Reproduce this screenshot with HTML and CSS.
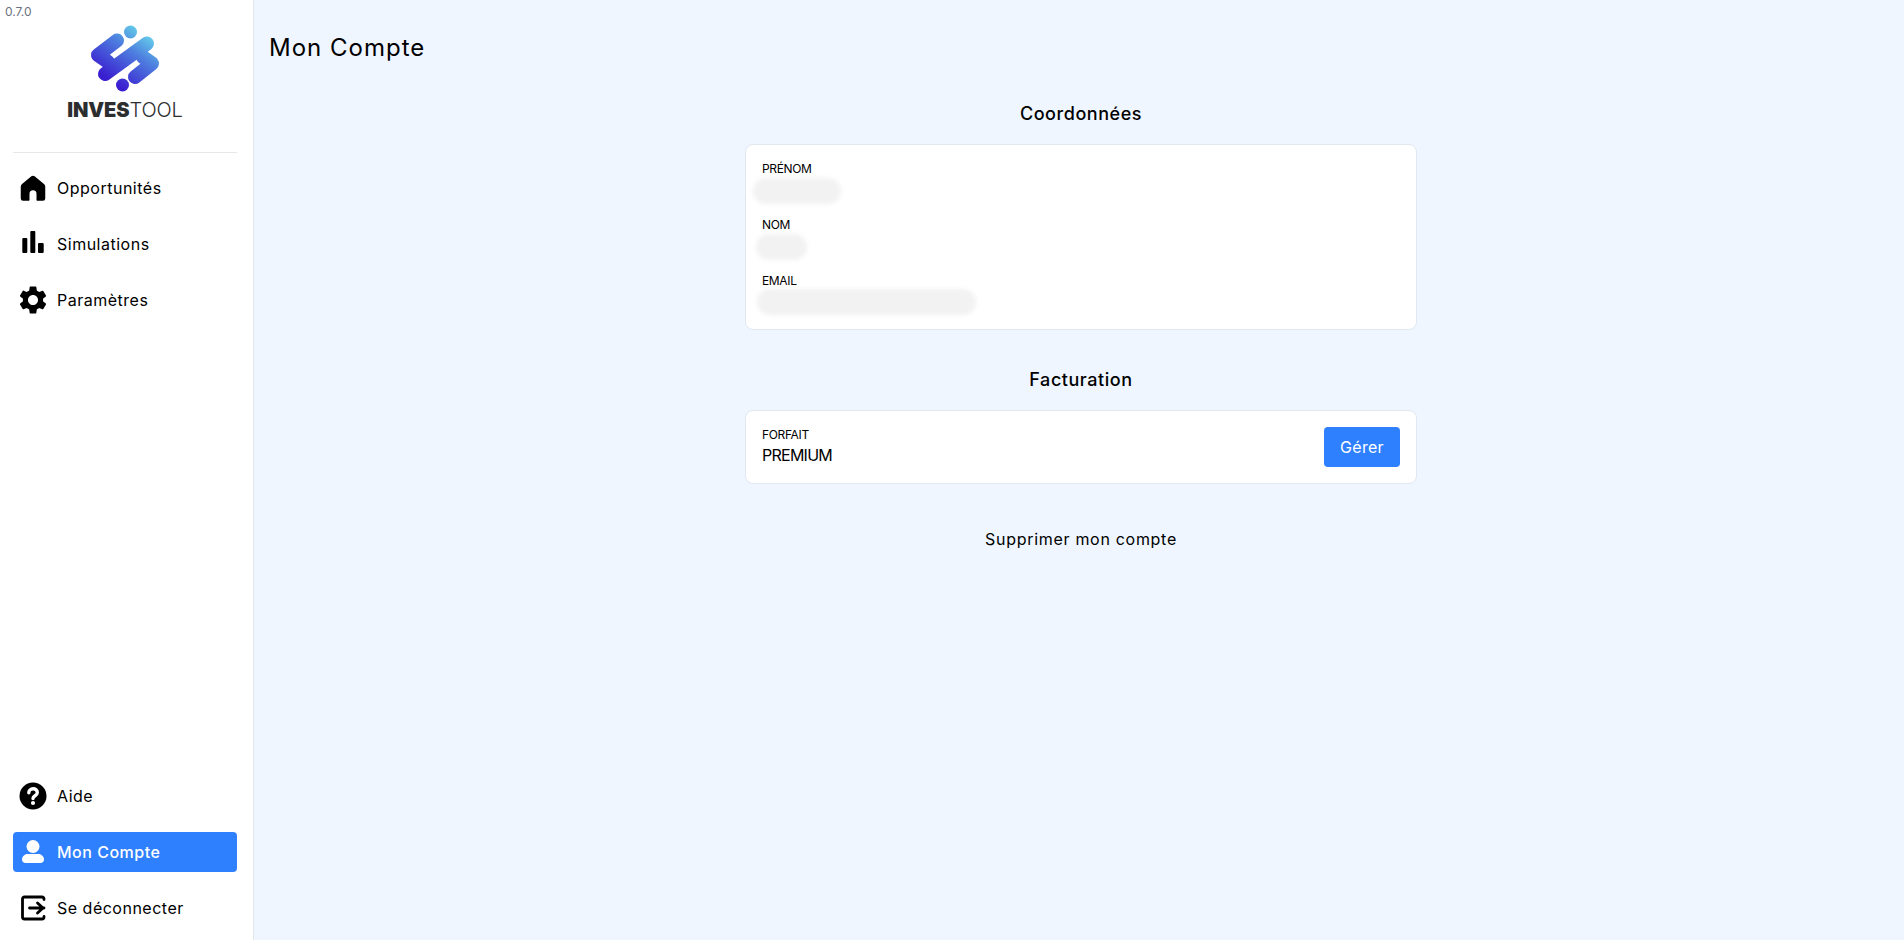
FILE: index.html
```html
<!DOCTYPE html>
<html lang="fr">
<head>
<meta charset="utf-8">
<title>Mon Compte</title>
<link rel="stylesheet" href="styles.css">
</head>
<body>
<div class="app">
  <aside class="sidebar">
    <span class="version">0.7.0</span>
    <div class="brand">
      <svg class="logo" viewBox="60 20 130 74" width="130" height="74" aria-hidden="true">
        <defs>
          <linearGradient id="lg" gradientUnits="userSpaceOnUse" x1="110" y1="80" x2="145" y2="30">
            <stop offset="0" stop-color="#3a1fd0"/>
            <stop offset=".6" stop-color="#4e7fdf"/>
            <stop offset="1" stop-color="#66d4ea"/>
          </linearGradient>
        </defs>
        <path fill="none" stroke="url(#lg)" stroke-width="14" stroke-linecap="round" stroke-linejoin="round" d="M117 40.500L98 55L108 62M105 74L147 43.500M135 77L152 63.500L143 57"/>
        <circle cx="130.500" cy="32" r="6.500" fill="url(#lg)"/>
        <circle cx="122.500" cy="85" r="6.500" fill="url(#lg)"/>
      </svg>
      <div class="wordmark"><b>INVES</b>TOOL</div>
    </div>
    <nav class="nav">
      <a class="item"><svg class="ico" viewBox="0 0 24 24"><path d="M12 1.500c.5 0 1 .2 1.400.5l8 6.500c.7.6 1.100 1.400 1.100 2.300V21a2 2 0 0 1-2 2H16a1 1 0 0 1-1-1v-5a3 3 0 0 0-6 0v5a1 1 0 0 1-1 1H3.500a2 2 0 0 1-2-2V10.800c0-.9.400-1.700 1.100-2.300l8-6.500c.4-.3.900-.5 1.400-.5z"/></svg>Opportunités</a>
      <a class="item"><svg class="ico" viewBox="0 0 28 28"><rect x="3.300" y="8" width="5" height="15" rx="1"/><rect x="11.300" y="1" width="5" height="22" rx="1"/><rect x="19" y="13" width="5.700" height="10" rx="1"/></svg>Simulations</a>
      <a class="item"><svg class="ico" viewBox="2 2 20 20"><path d="M19.140 12.940c.04-.3.06-.61.06-.94 0-.32-.02-.64-.07-.94l2.030-1.580c.18-.14.23-.41.12-.61l-1.920-3.320c-.12-.22-.37-.29-.59-.22l-2.390.96c-.5-.38-1.030-.7-1.620-.94l-.36-2.540c-.04-.24-.24-.41-.48-.41h-3.840c-.24 0-.43.17-.47.41l-.36 2.540c-.59.24-1.130.57-1.620.94l-2.390-.96c-.22-.08-.47 0-.59.22L2.740 8.870c-.12.21-.08.47.12.61l2.030 1.580c-.05.3-.09.63-.09.94s.02.64.07.94l-2.030 1.580c-.18.14-.23.41-.12.61l1.920 3.320c.12.22.37.29.59.22l2.390-.96c.5.38 1.030.7 1.620.94l.36 2.540c.05.24.24.41.48.41h3.840c.24 0 .44-.17.47-.41l.36-2.540c.59-.24 1.130-.56 1.620-.94l2.390.96c.22.08.47 0 .59-.22l1.920-3.320c.12-.22.07-.47-.12-.61l-2.010-1.580zM12 15.600c-1.980 0-3.600-1.620-3.600-3.600s1.620-3.600 3.600-3.600 3.600 1.620 3.600 3.600-1.620 3.600-3.600 3.600z"/></svg>Paramètres</a>
    </nav>
    <nav class="nav nav-bottom">
      <a class="item"><svg class="ico" viewBox="0 0 28 28"><circle cx="14" cy="14" r="13.500"/><path class="q" d="M9.800 10.800c0-2.400 1.900-4 4.300-4s4.200 1.500 4.200 3.700c0 3.300-4.300 3.200-4.300 6"/><circle class="qdot" cx="14" cy="21" r="2.100"/></svg>Aide</a>
      <a class="item active"><svg class="ico" viewBox="0 0 28 28"><circle cx="14" cy="8.500" r="6.500"/><path d="M3 21.500c0-3 2.600-5.500 5.500-5.500h11c2.900 0 5.500 2.500 5.500 5.500 0 2-1.500 3.500-3.500 3.500h-15C4.500 25 3 23.500 3 21.500z"/></svg>Mon Compte</a>
      <a class="item"><svg class="ico ico-line" viewBox="0 0 28 28"><path d="M25 5.500V5a2 2 0 0 0-2-2H5.500a2 2 0 0 0-2 2v18a2 2 0 0 0 2 2H23a2 2 0 0 0 2-2v-.5M10.500 14H25M18.500 9l5.500 5-5.500 5"/></svg>Se déconnecter</a>
    </nav>
  </aside>
  <main class="main">
    <h1 class="title">Mon Compte</h1>
    <div class="column">
      <h2 class="heading">Coordonnées</h2>
      <section class="card">
        <div class="field"><div class="label">PRÉNOM</div><div class="blur blur-first"></div></div>
        <div class="field"><div class="label">NOM</div><div class="blur blur-last"></div></div>
        <div class="field"><div class="label">EMAIL</div><div class="blur blur-mail"></div></div>
      </section>
      <h2 class="heading heading-next">Facturation</h2>
      <section class="card card-row">
        <div><div class="label">FORFAIT</div><div class="value">PREMIUM</div></div>
        <button class="btn">Gérer</button>
      </section>
      <a class="delete">Supprimer mon compte</a>
    </div>
  </main>
</div>
</body>
</html>
```
FILE: styles.css
```css
* { box-sizing: border-box; }
html, body { height: 100%; }
body { margin: 0; font-family: "Inter", "Liberation Sans", sans-serif; color: #000; background: #eff6ff; }
.app { display: flex; height: 940px; overflow: hidden; }

.sidebar { position: relative; width: 254px; flex: none; background: #fff; border-right: 1px solid #e5e7eb; padding: 0 16px 12px 13px; display: flex; flex-direction: column; }
.version { position: absolute; left: 5px; top: 4px; font-size: 12px; line-height: 16px; color: #6b7280; }
.brand { height: 153px; border-bottom: 1px solid #e5e7eb; display: flex; flex-direction: column; align-items: center; padding-top: 20px; }
.logo { overflow: visible; flex: none; }
.wordmark { margin-top: 3px; font-size: 20px; line-height: 26px; font-weight: 300; color: #2b2d2f; letter-spacing: -.1px; }
.wordmark b { font-weight: 900; }

.nav { display: flex; flex-direction: column; gap: 16px; margin-top: 15px; }
.nav-bottom { margin-top: auto; }
.item { display: flex; align-items: center; gap: 10px; height: 40px; padding-left: 6px; border-radius: 4px; font-size: 16px; letter-spacing: .5px; color: #000; }
.item.active { background: #2f80ff; color: #fff; font-weight: 500; }
.ico { width: 28px; height: 28px; flex: none; fill: currentColor; }
.ico .q { fill: none; stroke: #fff; stroke-width: 3.400; stroke-linecap: round; }
.ico .qdot { fill: #fff; }
.ico-line { fill: none; stroke: currentColor; stroke-width: 2.800; stroke-linecap: round; stroke-linejoin: round; }

.main { flex: 1; padding: 32px 11px 0 15px; }
.title { margin: 0; font-size: 24px; line-height: 32px; font-weight: 400; letter-spacing: 1px; }
.column { width: 672px; margin: 36px auto 0; display: flex; flex-direction: column; }
.heading { margin: 0 0 16px; font-size: 18px; line-height: 28px; font-weight: 500; text-align: center; letter-spacing: .55px; }
.heading-next { margin-top: 36px; }
.card { background: #fff; border: 1px solid #e2e8f0; border-radius: 8px; padding: 16px; display: flex; flex-direction: column; gap: 16px; }
.card-row { flex-direction: row; align-items: center; justify-content: space-between; }
.label { font-size: 12px; line-height: 16px; color: #000; letter-spacing: -.35px; }
.value { font-size: 16px; line-height: 24px; letter-spacing: -.75px; }
.field { height: 40px; }
.blur { height: 26px; background: #f2f2f2; border-radius: 13px; filter: blur(2px); }
.blur-first { width: 88px; margin: 1px 0 0 -9px; }
.blur-last { width: 51px; margin: 1px 0 0 -6px; }
.blur-mail { width: 219px; margin-left: -5px; }
.btn { width: 76px; height: 40px; border: 0; border-radius: 4px; background: #2f80ff; color: #fff; font: 400 16px "Inter", "Liberation Sans", sans-serif; letter-spacing: .3px; }
.delete { margin-top: 43px; font-size: 16px; line-height: 24px; text-align: center; letter-spacing: .7px; }
```
